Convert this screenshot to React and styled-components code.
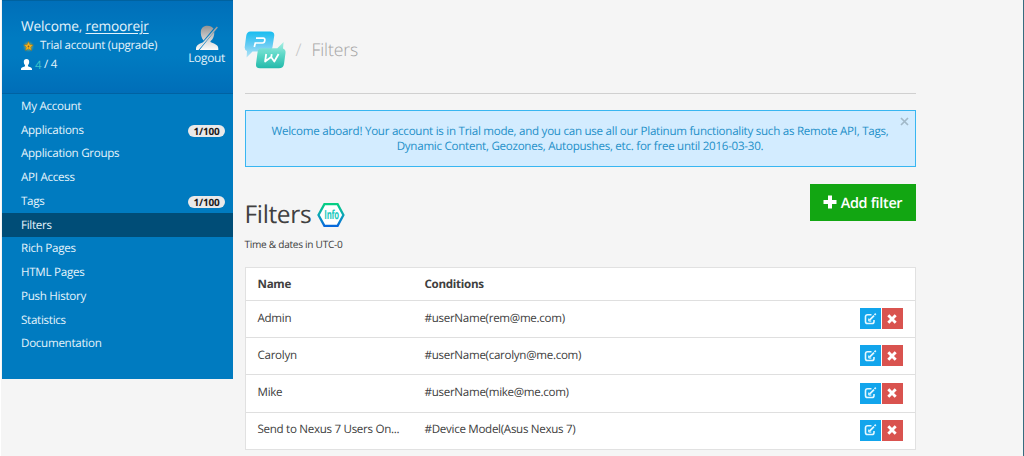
import React from "react";
import styled, { createGlobalStyle } from "styled-components";

const GlobalStyle = createGlobalStyle`
  * { box-sizing: border-box; }
  html, body { margin: 0; height: 456px; overflow: hidden; }
  body { background: #f5f5f5; color: #404040; font: 11.9px/16px "Open Sans", sans-serif; text-rendering: geometricPrecision; letter-spacing: -0.28px; }
  svg { display: block; flex: none; }
  a { color: inherit; text-decoration: none; }
`;

const Page = styled.div`
  display: flex;
  align-items: flex-start;
  width: 1024px;
  height: 456px;
  border-left: 1px solid #fff;
  border-right: 1px solid #376c7f;
`;

const Sidebar = styled.aside`
  width: 231px;
  height: 379px;
  margin-left: 1px;
  background: #007bc0;
  color: #e4f3fb;
  flex: none;
`;

const Account = styled.div`
  display: flex;
  justify-content: space-between;
  height: 94px;
  padding: 17px 8px 0 19px;
  border-top: 1px solid #00629f;
  border-bottom: 1px solid #0062a2;
  background: linear-gradient(#006fb9, #007bc1 40%, #007bc1 60%, #006eb8);
`;

const Welcome = styled.div`
  font-size: 13.7px;
  letter-spacing: -0.17px;
  line-height: 18px;
  white-space: nowrap;
  a { text-decoration: underline; text-underline-offset: 2px; }
`;

const AccountLine = styled.div`
  display: flex;
  align-items: center;
  gap: ${(p) => p.$gap}px;
  height: 19px;
  font-size: ${(p) => p.$size}px;
  white-space: nowrap;
  span { padding-top: 1.5px; }
`;

const Used = styled.span`
  color: #3fc5c9;
`;

const Logout = styled.a`
  display: flex;
  flex-direction: column;
  align-items: center;
  padding-top: 7px;
  font-size: 11.9px;
  line-height: 15px;
`;

const NavItem = styled.a`
  display: flex;
  align-items: center;
  justify-content: space-between;
  height: 23.75px;
  padding: 2px 8px 0 19px;
  font-size: 11.6px;
  background: ${(p) => (p.$active ? "#004d77" : "transparent")};
`;

const Badge = styled.span`
  width: 37px;
  height: 12px;
  border-radius: 6px;
  background: #e9e9e9;
  color: #1b1b1b;
  font-size: 10px;
  font-weight: 700;
  line-height: 12px;
  letter-spacing: -0.2px;
  text-align: center;
`;

const Main = styled.main`
  width: 671px;
  margin-left: 11.5px;
`;

const Breadcrumb = styled.header`
  display: flex;
  align-items: center;
  height: 94px;
  padding-top: 7px;
  border-bottom: 1px solid #d0d0d0;
  color: #a4a4a4;
  font-size: 17.6px;
  font-weight: 300;
  letter-spacing: -0.1px;
  svg { margin-left: -0.8px; }
`;

const Slash = styled.span`
  margin: 0 10px 0 9.8px;
  color: #c4c4c4;
`;

const Alert = styled.div`
  display: grid;
  grid-template-columns: 1fr 20px;
  height: 57px;
  margin-top: 16px;
  padding-left: 20px;
  border: 1px solid #38b6f1;
  background: #d3ecff;
  color: #2490c9;
  font-size: 11.6px;
  letter-spacing: -0.27px;
  text-align: center;
`;

const AlertText = styled.p`
  margin: 12.6px 0 0;
  line-height: 15.6px;
  white-space: nowrap;
`;

const Close = styled.span`
  padding-top: 6px;
  svg { margin: 0 auto; }
`;

const TitleBar = styled.div`
  display: flex;
  justify-content: space-between;
  height: 54px;
  padding-top: 17px;
`;

const Title = styled.h1`
  display: flex;
  align-items: center;
  gap: 6px;
  height: 30px;
  margin: 16px 0 0;
  font-size: 24.5px;
  letter-spacing: -0.35px;
  font-weight: 400;
`;

const AddButton = styled.button`
  display: flex;
  align-items: center;
  justify-content: center;
  gap: 4px;
  width: 106px;
  height: 37px;
  padding: 1px 0 0;
  border: 0;
  background: #12a612;
  color: #fff;
  font: 600 14.4px "Open Sans", sans-serif;
  letter-spacing: -0.3px;
  text-rendering: geometricPrecision;
  svg { margin-top: -2px; }
`;

const TimeNote = styled.p`
  height: 16px;
  margin: 15px 0 15px;
  font-size: 10.1px;
`;

const Table = styled.div`
  border: 1px solid #e1e1e1;
  background: #fff;
`;

const Row = styled.div`
  display: grid;
  grid-template-columns: 167px 1fr auto;
  align-items: center;
  height: ${(p) => (p.$head ? 32 : 37.2)}px;
  padding: ${(p) => (p.$head ? "1.5px 12px 0" : "0 12px 0.8px")};
  font-size: 11.6px;
  letter-spacing: -0.3px;
  font-weight: ${(p) => (p.$head ? 700 : 400)};
  border-top: ${(p) => (p.$head ? "0" : "1px solid #dfdfdf")};
`;

const Actions = styled.div`
  display: flex;
  gap: 1px;
`;

const Action = styled.button`
  display: flex;
  align-items: center;
  justify-content: center;
  width: 21px;
  height: 21px;
  padding: 0;
  border: 0;
  background: ${(p) => (p.$danger ? "#d9534f" : "#12a5ec")};
`;

const NAV = [
  ["My Account"],
  ["Applications", "1/100"],
  ["Application Groups"],
  ["API Access"],
  ["Tags", "1/100"],
  ["Filters"],
  ["Rich Pages"],
  ["HTML Pages"],
  ["Push History"],
  ["Statistics"],
  ["Documentation"],
];

const FILTERS = [
  ["Admin", "#userName(rem@me.com)"],
  ["Carolyn", "#userName(carolyn@me.com)"],
  ["Mike", "#userName(mike@me.com)"],
  ["Send to Nexus 7 Users On...", "#Device Model(Asus Nexus 7)"],
];

const StarIcon = () => (
  <svg width="14" height="14" viewBox="0 0 14 14">
    <defs>
      <radialGradient id="glow">
        <stop offset="0" stopColor="#9bbd6a" />
        <stop offset=".5" stopColor="#5f9c80" />
        <stop offset="1" stopColor="#007bc0" stopOpacity="0" />
      </radialGradient>
    </defs>
    <circle cx="7.500" cy="7.500" r="6.500" fill="url(#glow)" />
    <path d="M7.500 2.500l1.400 3.200 3.400.2-2.600 2.200.8 3.500-3-1.900-3 1.900.8-3.500-2.600-2.200 3.400-.2z" fill="#f9b51b" stroke="#8a6a20" strokeWidth=".5" />
    <circle cx="7.500" cy="7.500" r=".9" fill="#8a5e18" />
  </svg>
);

const UserIcon = () => (
  <svg width="11" height="11" viewBox="0 0 11 11" fill="#fff">
    <path d="M5.500 0C7.300 0 8.300 1.200 8.200 3c-.1 1.500-.6 2.500-1.200 3.200v1c1 .8 4 .9 4 2.800v1H0v-1c0-1.900 3-2 4-2.800v-1C3.400 5.500 2.900 4.500 2.800 3 2.700 1.200 3.700 0 5.500 0z" />
  </svg>
);

const LogoutIcon = () => (
  <svg width="24" height="26" viewBox="0 0 24 26">
    <defs>
      <linearGradient id="person" x1="0" y1="0" x2="0" y2="26" gradientUnits="userSpaceOnUse">
        <stop offset="0" stopColor="#909090" />
        <stop offset=".65" stopColor="#dedede" />
        <stop offset="1" stopColor="#fff" />
      </linearGradient>
    </defs>
    <g fill="url(#person)">
      <path d="M18.500 3.600L8.500 15.500C6.200 12.800 5.500 9 5.900 6 6.400 2.300 9.100.7 12.500.7c2.700 0 4.800 1 6 2.900z" />
      <path d="M19.300 6.700c.2 4-1.300 7.700-3.700 9.300l-.2 1c2.600 1.600 7.900 2.200 7.900 6.400V25H4.600z" />
      <path d="M21.800 1.600l1.100.8L3.500 25H1.300z" />
      <path d="M1 25v-1.500c0-3.500 4-5 7.300-6.200L2 25z" />
    </g>
  </svg>
);

const Logo = () => (
  <svg width="42" height="38" viewBox="0 0 42 38">
    <defs>
      <linearGradient id="blue" x1="0" y1="0" x2="0" y2="1">
        <stop offset="0" stopColor="#17bdf0" />
        <stop offset=".5" stopColor="#65cbf3" />
        <stop offset="1" stopColor="#b5e4f5" />
      </linearGradient>
      <linearGradient id="green" x1="0" y1="0" x2="0" y2="1">
        <stop offset="0" stopColor="#a4eee2" />
        <stop offset=".45" stopColor="#55d7c5" />
        <stop offset="1" stopColor="#13b5a5" />
      </linearGradient>
    </defs>
    <path d="M6.500.5H26q4.800 0 4.200 4.500L28.500 16q-.7 4.500-5.500 4.500H8.500L2.600 26.500 3 20Q.2 19 .8 15.500L2.200 5Q2.800.5 6.500.5z" fill="url(#blue)" />
    <path d="M18 17.300h15.300L39.600 11 39 17.500q3 1.200 2.500 4.500L40 33q-.7 4.300-5 4.300H16q-4.500 0-4-4.300l1.500-11.500q.5-4.200 4.500-4.200z" fill="url(#green)" fillOpacity=".93" />
    <path d="M10.300 16l1-4h7.200q2 0 2.300-2.500.3-2.300-1.600-2.300H12" fill="none" stroke="#fff" strokeWidth="1.700" />
    <path d="M22.200 23l-1.100 7.500 6-4.500 3.200 4.500 4.300-7.500M27.700 23.200l-.6 4" fill="none" stroke="#fff" strokeWidth="1.800" strokeLinejoin="round" />
  </svg>
);

const InfoIcon = () => (
  <svg width="28" height="26" viewBox="0 0 28 26">
    <defs>
      <linearGradient id="hex" x1="0" y1="0" x2="0" y2="1">
        <stop offset="0" stopColor="#06cf83" />
        <stop offset=".5" stopColor="#0ba5b5" />
        <stop offset="1" stopColor="#0768dc" />
      </linearGradient>
    </defs>
    <path d="M7.400 2.200h13.200L26.400 13l-5.800 10.800H7.400L1.500 13z" fill="#fff" stroke="url(#hex)" strokeWidth="2.300" />
    <text transform="translate(7.300 17.200) scale(.62 1)" fontFamily="Open Sans" fontSize="12.500" fontWeight="700" fill="#20c9bd">Info</text>
  </svg>
);

const PlusIcon = () => (
  <svg width="14" height="14" viewBox="0 0 14 14" fill="#fff">
    <path d="M5 .5h4V5h4.500v4H9v4.500H5V9H.5V5H5z" />
  </svg>
);

const EditIcon = () => (
  <svg width="13" height="12" viewBox="0 0 13 12" fill="none" stroke="#e5f8ff" strokeWidth="1.600">
    <path d="M7.500 1.700H3.600Q1.500 1.700 1.500 3.800v4.600q0 2.100 2.100 2.100h4.300Q10 10.500 10 8.400V7" />
    <path d="M5.300 7.300L10 2.600" strokeWidth="1.700" />
    <path d="M10.500 2l1.300-1.300" strokeWidth="1.700" />
    <path d="M4.700 5.500v2.600h2.600" strokeWidth="1" />
  </svg>
);

const RemoveIcon = () => (
  <svg width="10" height="10" viewBox="0 0 10 10" stroke="#fff" strokeWidth="2.900">
    <path d="M1.300 1.300l7.400 7.400M8.700 1.300L1.300 8.700" />
  </svg>
);

const CloseIcon = () => (
  <svg width="9" height="9" viewBox="0 0 9 9" stroke="#a2b9c9" strokeWidth="1.700">
    <path d="M1 1l7 7M8 1L1 8" />
  </svg>
);

export default function App() {
  return (
    <Page>
      <GlobalStyle />
      <Sidebar>
        <Account>
          <div>
            <Welcome>Welcome, <a href="#profile">remoorejr</a></Welcome>
            <AccountLine $gap={5} $size={11.5}><StarIcon /><span>Trial account (upgrade)</span></AccountLine>
            <AccountLine $gap={3} $size={11.5}><UserIcon /><span><Used>4</Used> / 4</span></AccountLine>
          </div>
          <Logout href="#logout"><LogoutIcon />Logout</Logout>
        </Account>
        <nav>
          {NAV.map(([label, count]) => (
            <NavItem key={label} href="#nav" $active={label === "Filters"}>
              <span>{label}</span>
              {count && <Badge>{count}</Badge>}
            </NavItem>
          ))}
        </nav>
      </Sidebar>
      <Main>
        <Breadcrumb><Logo /><Slash>/</Slash>Filters</Breadcrumb>
        <Alert>
          <AlertText>
            Welcome aboard! Your account is in Trial mode, and you can use all our Platinum functionality such as Remote API, Tags,
            <br />
            Dynamic Content, Geozones, Autopushes, etc. for free until 2016-03-30.
          </AlertText>
          <Close><CloseIcon /></Close>
        </Alert>
        <TitleBar>
          <Title>Filters <InfoIcon /></Title>
          <AddButton><PlusIcon />Add filter</AddButton>
        </TitleBar>
        <TimeNote>Time &amp; dates in UTC-0</TimeNote>
        <Table>
          <Row $head><span>Name</span><span>Conditions</span></Row>
          {FILTERS.map(([name, condition]) => (
            <Row key={name}>
              <span>{name}</span>
              <span>{condition}</span>
              <Actions>
                <Action aria-label="Edit"><EditIcon /></Action>
                <Action aria-label="Delete" $danger><RemoveIcon /></Action>
              </Actions>
            </Row>
          ))}
        </Table>
      </Main>
    </Page>
  );
}
